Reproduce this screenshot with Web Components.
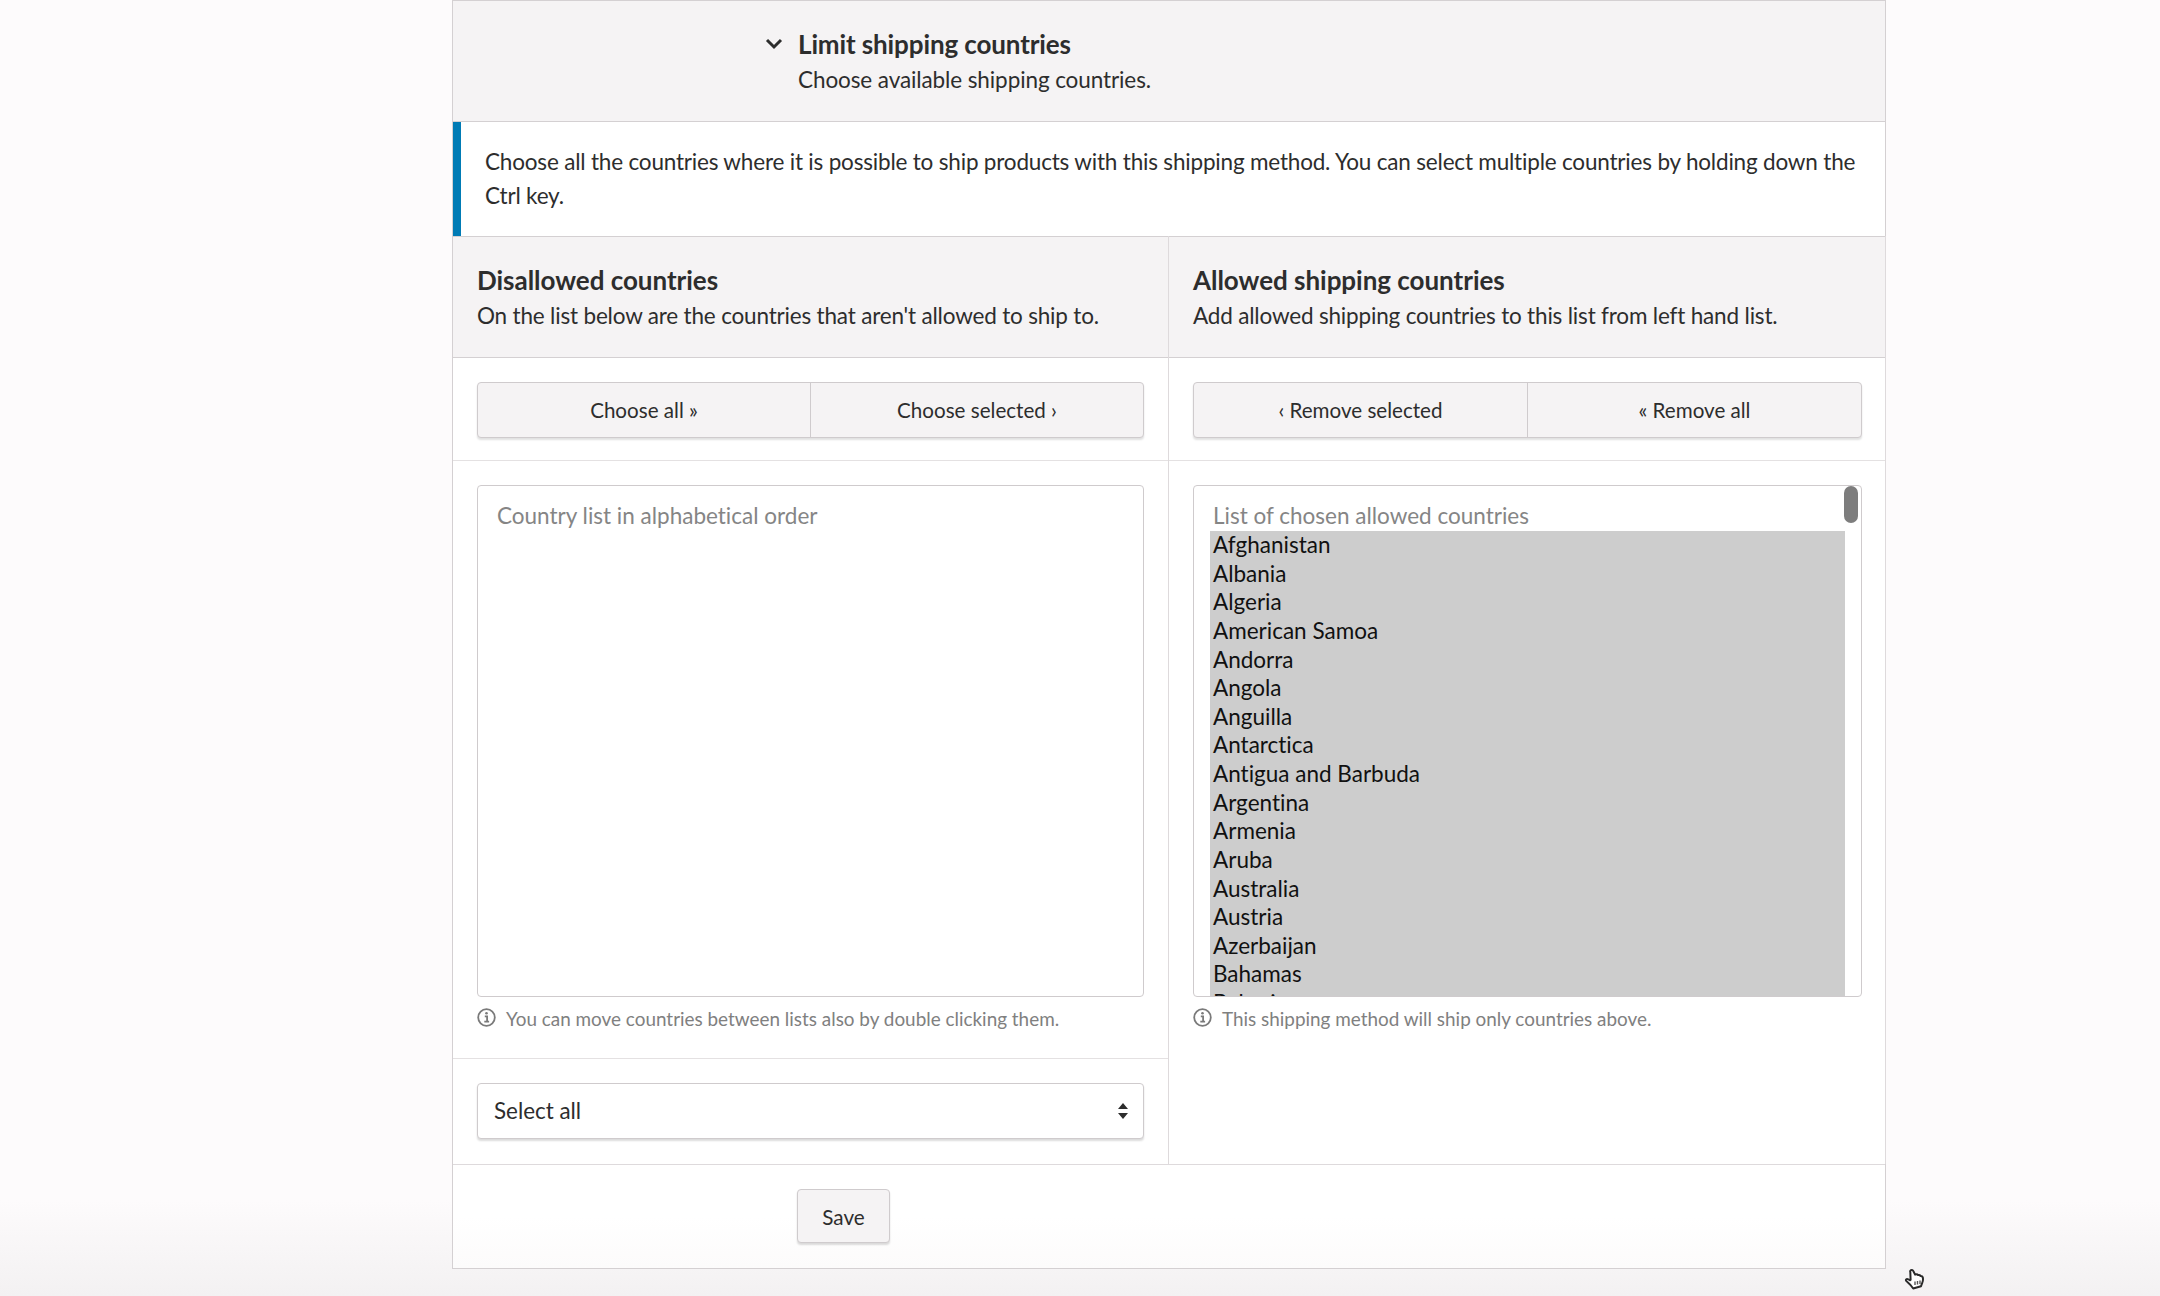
<!doctype html>
<html>
<head>
<meta charset="utf-8">
<title>Limit shipping countries</title>
<style>
html,body{margin:0;height:1296px;overflow:hidden}
body{font:22.5px/34px Lato,"Liberation Sans",sans-serif;letter-spacing:-.18px;font-variant-ligatures:none;color:#2d2d2d;background:linear-gradient(#fdfbfc 1200px,#f3f1f2 1296px)}
</style>
</head>
<body>
<shipping-page>
  <section-head slot="head" title="Limit shipping countries">Choose available shipping countries.</section-head>
  <info-notice slot="notice">Choose all the countries where it is possible to ship products with this shipping method. You can select multiple countries by holding down the Ctrl key.</info-notice>
  <country-col slot="left" heading="Disallowed countries" text="On the list below are the countries that aren't allowed to ship to.">
    <button-pair slot="buttons" a="Choose all »" b="Choose selected ›"></button-pair>
    <country-list slot="list" placeholder="Country list in alphabetical order"></country-list>
    <help-text slot="help">You can move countries between lists also by double clicking them.</help-text>
    <select-row slot="extra">Select all</select-row>
  </country-col>
  <country-col slot="right" heading="Allowed shipping countries" text="Add allowed shipping countries to this list from left hand list.">
    <button-pair slot="buttons" a="‹ Remove selected" b="« Remove all"></button-pair>
    <country-list slot="list" placeholder="List of chosen allowed countries" scrolled>
      <span>Afghanistan</span><span>Albania</span><span>Algeria</span><span>American Samoa</span><span>Andorra</span><span>Angola</span><span>Anguilla</span><span>Antarctica</span><span>Antigua and Barbuda</span><span>Argentina</span><span>Armenia</span><span>Aruba</span><span>Australia</span><span>Austria</span><span>Azerbaijan</span><span>Bahamas</span><span>Bahrain</span>
    </country-list>
    <help-text slot="help">This shipping method will ship only countries above.</help-text>
  </country-col>
  <save-bar slot="foot">Save</save-bar>
</shipping-page>
<script>
// small helper, every element is just css + markup in an open shadow root
const def = (name, css, html) =>
  customElements.define(
    name,
    class extends HTMLElement {
      constructor() {
        super();
        this.attachShadow({ mode: "open" });
      }
      connectedCallback() {
        const attr = (k) => this.getAttribute(k) || "";
        this.shadowRoot.innerHTML = "<style>" + css + "</style>" + html(attr, this);
      }
    }
  );

def(
  "shipping-page",
  ":host{display:block;position:relative;height:1296px}" +
    ".panel{margin-left:452px;width:1434px;height:1269px;box-sizing:border-box;background:#fff;border:1px solid #d4d0d2;display:flex;flex-direction:column}" +
    ".cols{display:grid;grid-template-columns:716px 717px;margin-right:-1px}" +
    ".hand{position:absolute;left:1904px;top:1268px}",
  () =>
    '<div class=panel><slot name=head></slot><slot name=notice></slot>' +
    '<div class=cols><slot name=left></slot><slot name=right></slot></div>' +
    '<slot name=foot></slot></div>' +
    // mouse pointer left over in the capture
    '<svg class=hand width=22 height=22 viewBox="0 0 22 22"><path d="M7 2.200c1-.6 2 0 2.400 1l1.700 3.400c1.300-.5 2.400-.3 3 .5 1-.2 1.900 0 2.400.8 1.200-.1 2 .5 2.300 1.500.4 1.600.2 3.600-.6 5.600l-1.200 3.200-7.800 2.300-2.700-3.500-4.300-4.100c-.6-.8-.2-1.900.8-2 .9-.1 1.900.5 3 1.300l.6-.4L6.300 4c-.3-.7 0-1.400.7-1.800z" fill="#fff" stroke="#2a2a2a" stroke-width="2" stroke-linejoin="round"/><path d="M11 13.500v3.500M13.500 13v3.500M16 12.500v3.500" stroke="#555" stroke-width="1.400"/></svg>'
);

def(
  "section-head",
  ":host{display:block;box-sizing:border-box;height:121px;background:#f5f3f4;border-bottom:1px solid #d4d0d2;padding:26px 0 0 345px}" +
    ".t{position:relative;font-size:26px;font-weight:700;line-height:34px;letter-spacing:-.12px}" +
    ".s{margin-top:2px;letter-spacing:-.1px}" +
    "svg{position:absolute;left:-33px;top:11px}",
  (a) =>
    '<div class=t><svg width=18 height=12 viewBox="0 0 18 12"><path d="M2 2l7 7 7-7" fill="none" stroke="#2d2d2d" stroke-width="3"/></svg>' +
    a("title") +
    "</div><div class=s><slot></slot></div>"
);

def(
  "info-notice",
  ":host{display:block;box-sizing:border-box;height:114px;background:#fff;border-left:8px solid #007bb5;padding:23px 16px 0 24px;line-height:34px;letter-spacing:-.19px}",
  () => "<slot></slot>"
);

def(
  "country-col",
  ":host{display:block;border-right:1px solid #dedadc}" +
    ".h{box-sizing:border-box;height:122px;background:#f5f3f4;border-top:1px solid #d4d0d2;border-bottom:1px solid #d4d0d2;padding:25px 16px 0 24px}" +
    "b{display:block;font-size:26px;font-weight:700;line-height:37px;letter-spacing:-.03px}" +
    ".btn{box-sizing:border-box;height:103px;padding:24px 24px 0;border-bottom:1px solid #e4e1e2}" +
    ".lst{box-sizing:border-box;height:598px;padding:24px 24px 0;border-bottom:1px solid #e4e1e2}" +
    ":host([slot=right]) .btn,:host([slot=right]) .lst{padding-right:23px}" +
    ":host([slot=right]) .lst{border-bottom:0}" +
    ".ex{height:105px;padding:24px 24px 0;box-sizing:border-box}",
  (a) =>
    "<div class=h><b>" + a("heading") + "</b><div>" + a("text") + "</div></div>" +
    "<div class=btn><slot name=buttons></slot></div>" +
    "<div class=lst><slot name=list></slot><slot name=help></slot></div>" +
    "<div class=ex><slot name=extra></slot></div>"
);

def(
  "button-pair",
  ":host{display:flex;box-sizing:border-box;height:56px;background:#f5f3f4;border:1px solid #cfcbcd;border-radius:4px;box-shadow:0 2px 2px rgba(0,0,0,.12);font-size:20.6px;letter-spacing:0}" +
    "div{flex:1;text-align:center;line-height:54px}" +
    "div+div{border-left:1px solid #cfcbcd}",
  (a) => "<div>" + a("a") + "</div><div>" + a("b") + "</div>"
);

def(
  "country-list",
  ":host{display:block;position:relative;box-sizing:border-box;height:512px;background:#fff;border:1px solid #cfcbcd;border-radius:4px;overflow:hidden;padding:14px 0 0 16px;letter-spacing:0}" +
    ".ph{color:#858585;line-height:31px;margin-left:3px}" +
    ".o{width:635px;background:#cdcdcd;color:#111;line-height:28.62px}" +
    "::slotted(span){display:block;padding-left:3px}" +
    ".thumb{position:absolute;right:3px;top:0;width:14px;height:37px;border-radius:7px;background:#7d7d7d}",
  (a, el) =>
    "<div class=ph>" + a("placeholder") + "</div>" +
    (el.hasAttribute("scrolled")
      ? "<div class=o><slot></slot></div><div class=thumb></div>"
      : "")
);

def(
  "help-text",
  ":host{display:flex;align-items:center;gap:10px;margin-top:5px;font-size:18.9px;line-height:34px;letter-spacing:0;color:#808080}" +
    "svg{flex:none;margin-top:-3px}",
  () =>
    '<svg width=19 height=19 viewBox="0 0 19 19"><circle cx=9.500 cy=9.500 r=8.300 fill=none stroke="#7a7a7a" stroke-width=1.800 /><path d="M7.800 8.400h2.300v4.800M7.300 13.700h4.800" fill=none stroke="#7a7a7a" stroke-width=1.800 /><circle cx=9.500 cy=5.300 r=1.300 fill="#7a7a7a"/></svg><span><slot></slot></span>'
);

def(
  "select-row",
  ":host{display:flex;align-items:center;justify-content:space-between;box-sizing:border-box;height:56px;background:#fff;border:1px solid #cfcbcd;border-radius:4px;box-shadow:0 2px 2px rgba(0,0,0,.14);padding:0 15px 0 16px;font-size:22.4px;letter-spacing:0}" +
    "svg{flex:none}",
  () =>
    '<slot></slot><svg width=10 height=16 viewBox="0 0 10 16"><path d="M5 0l5 6H0zM5 16l5-6H0z" fill="#2d2d2d"/></svg>'
);

def(
  "save-bar",
  ":host{display:block;box-sizing:border-box;flex:1;border-top:1px solid #dedadc;padding:24px 0 0 344px;background:linear-gradient(#fff 50%,#fcfbfb)}" +
    "div{box-sizing:border-box;width:93px;height:54px;background:#f5f3f4;border:1px solid #cfcbcd;border-radius:4px;box-shadow:0 2px 2px rgba(0,0,0,.14);text-align:center;line-height:54px;font-size:20.7px;letter-spacing:0}",
  () => "<div><slot></slot></div>"
);
</script>
</body>
</html>
